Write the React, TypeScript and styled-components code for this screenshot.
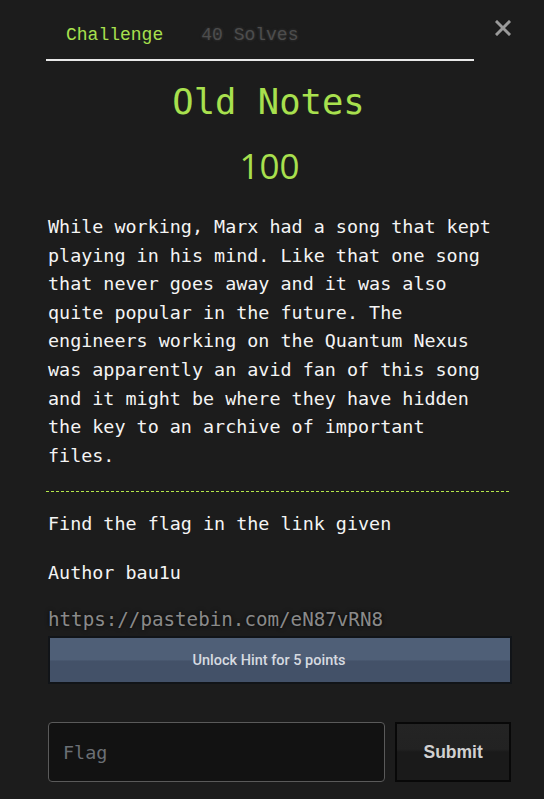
import styled, { createGlobalStyle } from 'styled-components';

const GlobalStyle = createGlobalStyle`
  html, body {
    margin: 0;
    padding: 0;
    background: #1c1c1c;
  }
  * {
    box-sizing: border-box;
  }
`;

const MONO = `'DejaVu Sans Mono', 'Liberation Mono', monospace`;
const GREEN = '#a8e04e';

const challenge = {
  name: 'Old Notes',
  value: 100,
  solves: 40,
  description:
    'While working, Marx had a song that kept playing in his mind. Like that one song that never goes away and it was also quite popular in the future. The engineers working on the Quantum Nexus was apparently an avid fan of this song and it might be where they have hidden the key to an archive of important files.',
  task: 'Find the flag in the link given',
  author: 'Author bau1u',
  link: 'https://pastebin.com/eN87vRN8',
  hintCost: 5,
};

const App = () => {
  return (
    <>
      <GlobalStyle />
      <Modal>
        <Header>
          <Tabs>
            <Tab active>Challenge</Tab>
            <Tab>{challenge.solves} Solves</Tab>
          </Tabs>
          <Close aria-label='close'>
            <svg width='16' height='16' viewBox='0 0 16 16'>
              <path d='M2 2 L14 14 M14 2 L2 14' stroke='#9a9a9a' strokeWidth='3' strokeLinecap='square' />
            </svg>
          </Close>
        </Header>
        <Title>{challenge.name}</Title>
        <Value>{challenge.value}</Value>
        <Description>{challenge.description}</Description>
        <Divider />
        <Line>{challenge.task}</Line>
        <Line>{challenge.author}</Line>
        <Link>{challenge.link}</Link>
        <HintButton>Unlock Hint for {challenge.hintCost} points</HintButton>
        <SubmitRow>
          <FlagInput placeholder='Flag' />
          <SubmitButton>Submit</SubmitButton>
        </SubmitRow>
      </Modal>
    </>
  );
};

const Modal = styled.div`
  width: 544px;
  min-height: 799px;
  padding: 0 33px 0 48px;
  background: #1c1c1c;
  font-family: ${MONO};
  display: flex;
  flex-direction: column;
`;

const Header = styled.div`
  display: flex;
  align-items: flex-start;
  justify-content: space-between;
  padding-top: 14px;
`;

const Tabs = styled.div`
  display: flex;
  width: 428px;
  margin-left: -2px;
  border-bottom: 2px solid #e8e8e8;
  padding: 11px 0 14px 20px;
  gap: 38px;
`;

const Tab = styled.span<{ active?: boolean }>`
  font-family: 'Liberation Mono', monospace;
  font-size: 18px;
  line-height: 20px;
  color: ${(p) => (p.active ? GREEN : '#4d4d4d')};
  text-shadow: ${(p) => (p.active ? 'none' : '0 0 3px rgba(120, 120, 120, 0.35)')};
`;

const Close = styled.div`
  margin-top: 4px;
  margin-right: -2px;
  width: 20px;
  height: 20px;
  display: flex;
  align-items: center;
  justify-content: center;
`;

// title and value sit centred on the tab strip, not on the full content width
const Title = styled.h1`
  margin: 19px 22px 0 0;
  text-align: center;
  font-family: ${MONO};
  font-weight: normal;
  font-size: 35.5px;
  line-height: 44px;
  color: ${GREEN};
`;

const Value = styled.div`
  margin: 19px 20px 0 0;
  text-align: center;
  font-family: 'Open Sans', sans-serif;
  font-size: 35px;
  line-height: 46px;
  color: ${GREEN};
`;

const Description = styled.p`
  margin: 24px 0 0;
  max-width: 448px;
  font-size: 18.4px;
  line-height: 28.6px;
  color: #f4f4f4;
`;

const Divider = styled.div`
  margin: 21px 0 0 -2px;
  width: 465px;
  height: 1px;
  background: repeating-linear-gradient(to right, #b4e84a 0 3px, transparent 3px 5px);
`;

const Line = styled.p`
  margin: 16px 0 0;
  font-size: 18.4px;
  line-height: 32px;
  color: #f4f4f4;

  & + & {
    margin-top: 17px;
  }
`;

const Link = styled.div`
  margin-top: 18px;
  font-size: 19.2px;
  line-height: 26px;
  color: #8a8a8a;
  text-shadow: 0 0 4px rgba(0, 0, 0, 0.9);
`;

const HintButton = styled.button`
  margin-top: 3px;
  width: 464px;
  height: 48px;
  padding: 0 22px 0 0;
  border: 2px solid #111418;
  background: linear-gradient(to bottom, #4f5f77 0%, #4f5f77 50%, #435168 52%, #435168 100%);
  color: #d6dae0;
  font-family: Roboto, 'Liberation Sans', Arial, sans-serif;
  font-weight: 500;
  font-size: 14.5px;
  cursor: pointer;
`;

const SubmitRow = styled.div`
  margin-top: 38px;
  display: flex;
  gap: 10px;
`;

const FlagInput = styled.input`
  width: 338px;
  height: 60px;
  padding: 0 14px;
  background: #121212;
  border: 1px solid #5a5a5a;
  border-radius: 4px;
  color: #ddd;
  font-family: ${MONO};
  font-size: 18.4px;

  &::placeholder {
    color: #6b6f75;
  }
`;

const SubmitButton = styled.button`
  width: 116px;
  height: 60px;
  border: 2px solid #080808;
  background: linear-gradient(to bottom, #242424 0%, #222 45%, #1a1a1a 50%, #1a1a1a 100%);
  color: #d0d0d0;
  font-family: 'Liberation Sans', Arial, sans-serif;
  font-weight: bold;
  font-size: 17.5px;
  cursor: pointer;
`;

export default App;
